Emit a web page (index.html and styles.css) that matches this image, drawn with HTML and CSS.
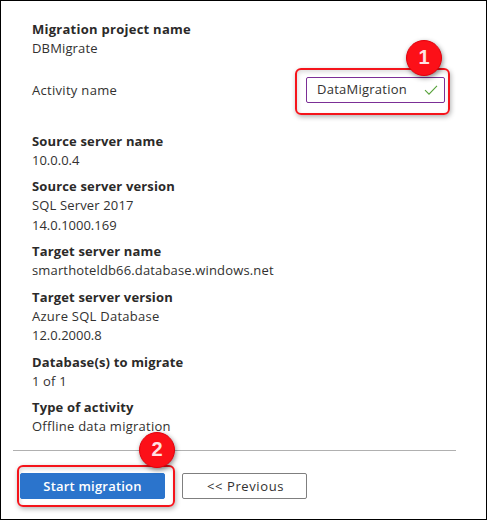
FILE: index.html
```html
<!DOCTYPE html>
<html lang="en">
<head>
<meta charset="utf-8">
<title>Migration summary</title>
<link rel="stylesheet" href="styles.css">
</head>
<body>
<main class="panel">
  <dl class="group project">
    <dt>Migration project name</dt>
    <dd>DBMigrate</dd>
  </dl>
  <div class="activity">
    <span class="label">Activity name</span>
    <div class="callout callout-input">
      <div class="field"><span>DataMigration</span>
        <svg class="check" viewBox="0 0 14 12"><path d="M1 6.2 5 10.2 13 1.8"/></svg>
      </div>
      <span class="badge">1</span>
    </div>
  </div>
  <section class="details">
    <dl class="group"><dt>Source server name</dt><dd class="num">10.0.0.4</dd></dl>
    <dl class="group"><dt>Source server version</dt><dd>SQL Server 2017</dd><dd class="num">14.0.1000.169</dd></dl>
    <dl class="group"><dt>Target server name</dt><dd>smarthoteldb66.database.windows.net</dd></dl>
    <dl class="group"><dt>Target server version</dt><dd class="spaced">Azure SQL Database</dd><dd class="num">12.0.2000.8</dd></dl>
    <dl class="group"><dt>Database(s) to migrate</dt><dd>1 of 1</dd></dl>
    <dl class="group"><dt>Type of activity</dt><dd class="spaced">Offline data migration</dd></dl>
  </section>
  <footer class="footer">
    <div class="callout callout-button">
      <button class="btn primary">Start migration</button>
      <span class="badge">2</span>
    </div>
    <button class="btn secondary">&lt;&lt; Previous</button>
  </footer>
</main>
</body>
</html>
```

FILE: styles.css
```css
* { box-sizing: border-box; }
body { margin: 0; background: #fff; }
.panel {
  width: 487px;
  height: 520px;
  border: 1px solid #000;
  padding: 19px 0 0;
  overflow: hidden;
  color: #323130;
  font: 13px/19px "Open Sans", "Noto Sans", sans-serif;
  letter-spacing: 0.15px;
}
.group { margin: 0 0 7.4px 31px; }
dt { font-weight: 700; color: #2b2a29; letter-spacing: 0.15px; }
dd { margin: 0; }
dd + dd { margin-top: 0.6px; }
.num { letter-spacing: 0; }
.spaced { letter-spacing: 0.26px; }
.project { margin-bottom: 10px; }
.project dt { letter-spacing: 0.26px; }
.activity {
  display: flex;
  justify-content: space-between;
  height: 47px;
  margin: 0 36px 0 31px;
}
.label { margin-top: 13px; letter-spacing: 0.3px; }
.callout {
  position: relative;
  border: 2px solid #f5141b;
  border-radius: 6px;
  box-shadow: 1px 2px 5px rgba(0, 0, 0, .3), inset 1px 2px 4px rgba(0, 0, 0, .14);
}
.callout-input { width: 155px; height: 47px; padding: 7px 0 0 9px; }
.field {
  display: flex;
  align-items: center;
  justify-content: space-between;
  width: 139px;
  height: 26px;
  padding: 0 6px 1px 10px;
  border: 1px solid #7b2f96;
  border-radius: 2px;
  background: #fff;
  letter-spacing: 0.25px;
}
.check { width: 14px; height: 12px; fill: none; stroke: #57a23a; stroke-width: 1.1; }
.badge {
  position: absolute;
  width: 36px;
  height: 36px;
  border: 1.5px solid #e3000b;
  border-radius: 50%;
  background: #fc1018;
  box-shadow: 1px 2px 5px rgba(0, 0, 0, .45);
  color: #ffe3e3;
  font: bold 20px/33px "Liberation Sans", sans-serif;
  letter-spacing: 0;
  text-align: center;
}
.callout-input .badge { left: 109px; top: -30px; }
.callout-button .badge { left: 120px; top: -35px; }
.details { margin-top: 17px; height: 318px; }
.footer {
  display: flex;
  align-items: flex-start;
  gap: 7px;
  width: 443px;
  margin-left: 12px;
  padding: 14px 0 0 4px;
  border-top: 1px solid #b0b0b0;
}
.callout-button { width: 158px; height: 42px; padding: 6px 0 0 1px; }
.btn {
  display: block;
  height: 26px;
  padding: 0 0 1px;
  border-radius: 2px;
  font: 600 13px/22px "Open Sans", "Noto Sans", sans-serif;
  letter-spacing: 0.2px;
}
.primary { width: 145px; border: 1px solid #2b74cc; background: #2b74cc; color: #fff; }
.secondary { width: 125px; margin-top: 8px; padding-left: 2px; border: 1px solid #7f7f7f; background: #fff; color: #323130; font-weight: 500; letter-spacing: 0.6px; }
```
